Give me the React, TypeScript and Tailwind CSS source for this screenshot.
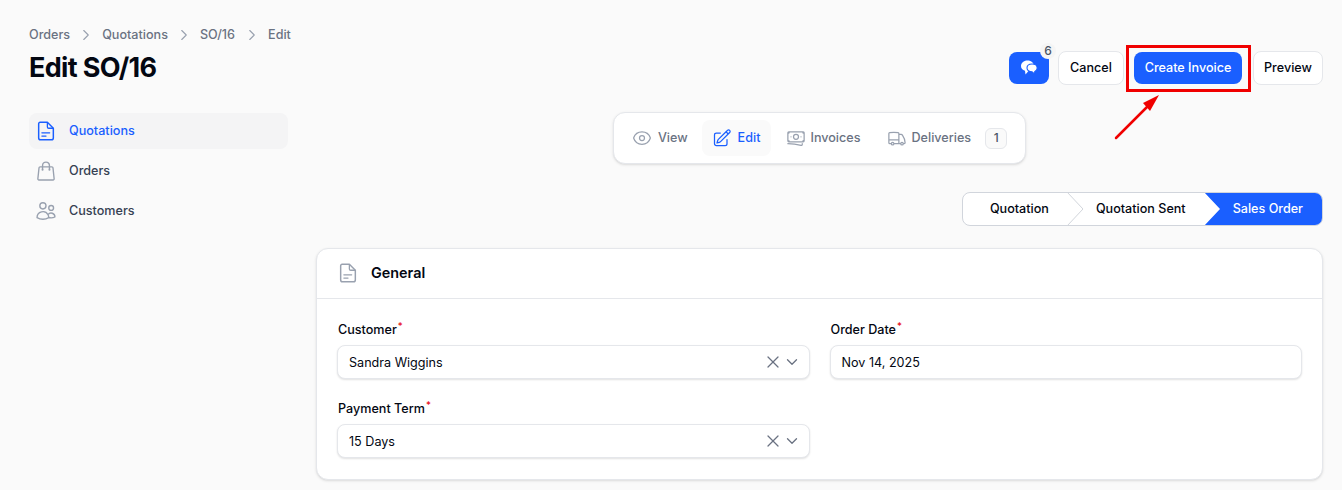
import { ChevronDown, ChevronRight, X } from 'lucide-react'
import {
  HiOutlineBanknotes,
  HiOutlineEye,
  HiOutlinePencilSquare,
  HiOutlineShoppingBag,
  HiOutlineTruck,
  HiOutlineUsers,
} from 'react-icons/hi2'

const crumbs = ['Orders', 'Quotations', 'SO/16', 'Edit']

function DocIcon({ className }: { className?: string }) {
  return (
    <svg width="22" height="22" viewBox="0 0 24 24" fill="none" stroke="currentColor" className={className}>
      <path d="M5.5 2.5 H13.5 L20 9 V19.5 A2 2 0 0 1 18 21.5 H6 A2 2 0 0 1 4 19.5 V4 A1.5 1.5 0 0 1 5.5 2.5 Z" strokeWidth="1.6" strokeLinejoin="round" />
      <path d="M13.5 2.5 V7.5 A1.5 1.5 0 0 0 15 9 H20" strokeWidth="1.4" />
      <path d="M7.5 14 H16 M7.5 17.5 H12" strokeWidth="1.4" strokeLinecap="round" />
    </svg>
  )
}

function ChatIcon() {
  return (
    <svg width="18" height="16" viewBox="0 0 18 16">
      <path d="M7.5 0.5 C11.5 0.5 14 3 14 6 C14 9 11.5 11 8.5 11 L5.5 14.5 L5 10.8 C2.5 10 1 8.5 1 6 C1 3 3.5 0.5 7.5 0.5 Z" fill="#fff" />
      <path d="M12 4 C15 4 17.2 5.6 17.2 8 C17.2 9.6 16.2 10.8 14.8 11.4 L14.6 14 L12 11.8 C9 11.8 7 10.2 7 8 C7 5.6 9 4 12 4 Z" fill="#fff" stroke="#1a5fff" strokeWidth="1.1" />
    </svg>
  )
}

function Field({ label, value, select }: { label: string; value: string; select?: boolean }) {
  return (
    <div>
      <label className="block pl-[1px] text-[12.6px] leading-[16px] font-medium text-gray-950 mb-[7px]">
        {label}
        <sup className="text-red-600 font-medium ml-[1px]">*</sup>
      </label>
      <div className="flex items-center h-[34px] pl-[11px] pr-[8px] bg-white rounded-lg border border-gray-200 shadow-[0_1px_2px_rgba(0,0,0,0.12)] text-[12.6px] text-gray-950">
        <span className="flex-1 pt-[2px]">{value}</span>
        {select && (
          <div className="flex items-center text-gray-500">
            <X size={20} strokeWidth={1.5} />
            <ChevronDown size={18} strokeWidth={1.75} />
          </div>
        )}
      </div>
    </div>
  )
}

export default function App() {
  return (
    <div className="relative h-[490px] overflow-hidden bg-[#fafafa] font-['Inter',sans-serif]">
      <div className="pl-[29px] pr-[19px] pt-[27px]">
        {/* Header */}
        <div className="flex items-end justify-between">
          <div>
            <div className="flex items-center h-[16px] text-[12.6px] font-medium text-gray-500">
              {crumbs.map((c, i) => (
                <div key={c} className="flex items-center">
                  {i > 0 && (
                    <ChevronRight
                      size={18}
                      strokeWidth={1.5}
                      className={i === 3 ? 'ml-[8px] mr-[7px] text-gray-400' : 'mx-[7px] text-gray-400'}
                    />
                  )}
                  <span>{c}</span>
                </div>
              ))}
            </div>
            <h1 className="mt-[7px] text-[27px] leading-[36px] font-bold tracking-tight text-gray-950">Edit SO/16</h1>
          </div>
          <div className="flex items-center gap-[10px] mb-[1px] text-[12.6px] font-medium">
            <button className="relative flex items-center justify-center w-[40px] h-[32px] -mr-[1px] rounded-lg bg-[#1a5fff] text-white">
              <ChatIcon />
              <span className="absolute -top-[9px] -right-[7px] flex items-center justify-center w-[16px] h-[16px] rounded-full bg-[#f5f5f5] text-[12px] font-medium text-gray-600">6</span>
            </button>
            <button className="h-[34px] w-[66px] rounded-lg bg-white border border-gray-200 text-gray-950">Cancel</button>
            <button className="h-[32px] w-[108px] rounded-lg bg-[#1a5fff] text-white">Create Invoice</button>
            <button className="h-[34px] w-[70px] ml-[1px] rounded-lg bg-white border border-gray-200 text-gray-950">Preview</button>
          </div>
        </div>

        <div className="flex gap-[28px] mt-[26px]">
          {/* Sidebar */}
          <nav className="w-[259px] shrink-0 flex flex-col gap-[4px] pt-[1px] text-[12.6px] font-medium">
            <a className="flex items-center gap-[12px] h-[36px] pl-[6px] rounded-lg bg-[#f4f4f5] text-[#1a5fff]">
              <DocIcon />
              Quotations
            </a>
            <a className="flex items-center gap-[12px] h-[36px] pl-[6px] rounded-lg text-gray-700">
              <HiOutlineShoppingBag size={22} className="text-gray-400" />
              Orders
            </a>
            <a className="flex items-center gap-[12px] h-[36px] pl-[6px] rounded-lg text-gray-700">
              <HiOutlineUsers size={22} className="text-gray-400" />
              Customers
            </a>
          </nav>

          {/* Main */}
          <main className="flex-1 min-w-0">
            <div className="flex justify-center">
              <div className="flex items-center gap-[4px] h-[52px] px-[8px] bg-white rounded-xl border border-gray-200 shadow-sm text-[12.6px] font-medium text-gray-500">
                <a className="flex items-center gap-[6px] h-[36px] px-[10px]">
                  <HiOutlineEye size={20} className="text-gray-400" />
                  View
                </a>
                <a className="flex items-center gap-[6px] h-[36px] pl-[10px] pr-[11px] rounded-lg bg-[#fafafa] text-[#1a5fff]">
                  <HiOutlinePencilSquare size={20} />
                  Edit
                </a>
                <a className="flex items-center gap-[4px] h-[36px] pl-[12px] pr-[10px] -ml-[1px]">
                  <HiOutlineBanknotes size={20} className="text-gray-400" />
                  Invoices
                </a>
                <a className="flex items-center gap-[5px] h-[36px] pl-[12px] pr-[10px]">
                  <HiOutlineTruck size={20} className="text-gray-400" />
                  Deliveries
                  <span className="flex items-center justify-center ml-[9px] w-[22px] h-[21px] rounded-md bg-[#fafafa] border border-gray-200 text-[12px] font-medium text-gray-600">1</span>
                </a>
              </div>
            </div>

            {/* Stepper */}
            <div className="flex justify-end mt-[28px]">
              <div className="flex items-stretch h-[34px] rounded-lg border border-gray-300 bg-white overflow-hidden text-[12.6px] font-medium text-gray-950">
                <span className="flex items-center pl-[27px] pr-[18px]">Quotation</span>
                <svg width="16" height="34" viewBox="0 0 16 34" className="shrink-0 -my-px">
                  <path d="M0 0 L16 17 L0 34" fill="none" stroke="#d1d5db" />
                </svg>
                <span className="flex items-center pl-[13px] pr-[18px]">Quotation Sent</span>
                <svg width="16" height="34" viewBox="0 0 16 34" className="shrink-0 -my-px">
                  <path d="M0 0 L16 17 L0 34 L16 34 L16 0 Z" fill="#1a5fff" />
                </svg>
                <span className="flex items-center pl-[13px] pr-[19px] bg-[#1a5fff] text-white">Sales Order</span>
              </div>
            </div>

            {/* General card */}
            <section className="mt-[22px] bg-white rounded-xl border border-gray-200 shadow-sm">
              <header className="flex items-center gap-[12px] h-[50px] px-[20px] pb-[1px] border-b border-gray-200">
                <DocIcon className="text-gray-400" />
                <h2 className="text-[14.4px] font-semibold text-gray-950">General</h2>
              </header>
              <div className="grid grid-cols-2 gap-x-[20px] gap-y-[22px] pt-[23px] px-[20px] pb-[21px]">
                <Field label="Customer" value="Sandra Wiggins" select />
                <Field label="Order Date" value="Nov 14, 2025" />
                <Field label="Payment Term" value="15 Days" select />
              </div>
            </section>
          </main>
        </div>
      </div>

      {/* Annotation over the screenshot */}
      <div className="absolute left-[1126px] top-[45px] w-[125px] h-[47px] border-[3px] border-[#f00000] pointer-events-none" />
      <svg className="absolute left-[1110px] top-[90px] pointer-events-none" width="52" height="52" viewBox="0 0 52 52">
        <path d="M6 48 L38 16" stroke="#f00000" strokeWidth="2.5" strokeLinecap="round" />
        <path d="M49 5 L33 13 L40 21 Z" fill="#f00000" />
      </svg>
    </div>
  )
}
